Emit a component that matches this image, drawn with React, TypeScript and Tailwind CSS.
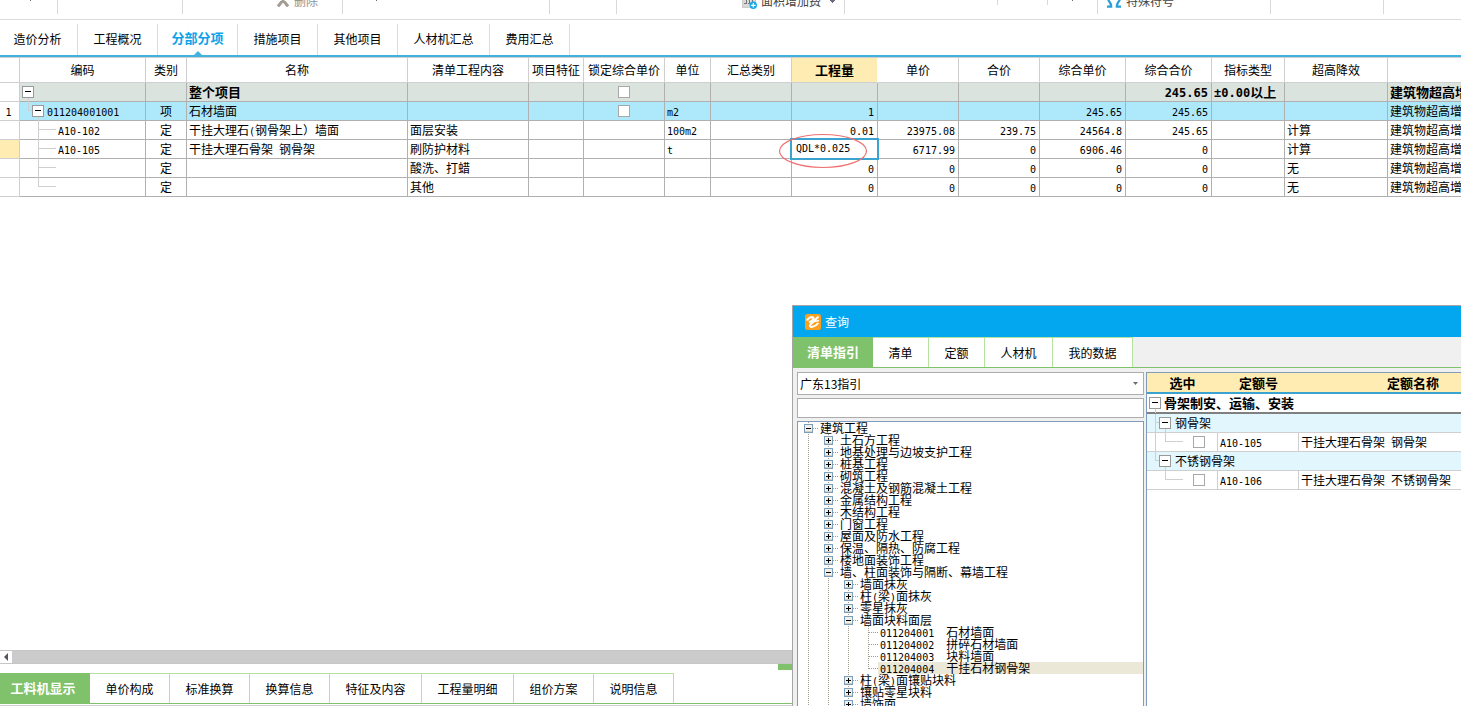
import React from "react";

const SANS = "font-['Noto_Sans_CJK_SC',sans-serif]";

/* Latin runs are set in a narrow monospace so that figures line up in columns. */
function T({ children, bold }: { children: string; bold?: boolean }) {
  const parts = children.split(/([\x20-\x7e±]+)/).filter(Boolean);
  return (
    <>
      {parts.map((p, i) =>
        /^[\x20-\x7e±]/.test(p) ? (
          <span
            key={i}
            className={
              bold
                ? "whitespace-pre font-['DejaVu_Sans_Mono',monospace] text-[12px] leading-none"
                : "whitespace-pre font-['DejaVu_Sans_Mono',monospace] text-[10px] leading-none"
            }
          >
            {p}
          </span>
        ) : (
          <React.Fragment key={i}>{p}</React.Fragment>
        )
      )}
    </>
  );
}

function Caret({ className = "" }: { className?: string }) {
  return (
    <svg className={`h-1 w-[7px] shrink-0 ${className}`} viewBox="0 0 7 4" shapeRendering="crispEdges">
      <path d="M0 0h7v1H6v1H5v1H4v1H3V3H2V2H1V1H0z" fill="#6b6b7b" />
    </svg>
  );
}

function Toolbar() {
  const sep = "shrink-0 border-r border-[#d9d9d9]";
  return (
    <div className="h-5 shrink-0 overflow-hidden border-b border-[#dcdcdc] bg-white text-[12px] text-[#444]">
      <div className="-mt-[6px] flex h-5 items-start leading-[14px]">
        <div className={`${sep} h-5 w-[58px] pl-[27px] pt-[3px]`}>
          <Caret />
        </div>
        <div className={`${sep} h-5 w-[125px]`} />
        <div className={`${sep} flex h-5 w-[160px] pl-[93px]`}>
          <button className="flex items-start gap-1 text-[#8f8f8f]">
            <svg className="h-[13px] w-[14px]" viewBox="0 0 14 13">
              <path d="M2 0L7 6L12 0M7 6L2 12.500M7 6L12 12.500" stroke="#a39d94" strokeWidth="3" fill="none" />
            </svg>
            删除
          </button>
        </div>
        <div className={`${sep} h-5 w-[207px] pl-[30px] pt-[3px]`}>
          <Caret />
        </div>
        <div className={`${sep} h-5 w-[67px]`} />
        <div className={`${sep} flex h-5 w-[228px] pl-[125px]`}>
          <button className="flex items-start gap-1">
            <svg className="h-[15px] w-[15px]" viewBox="0 0 15 15">
              <rect x="0.500" y="0.500" width="13" height="13" fill="#d9d9d9" stroke="#cccccc" />
              <path d="M2 9.500h3M6 9.500h2M9 9.500h2M4.500 6v4M7.500 6v4M10.500 6v4" stroke="#777" fill="none" />
              <circle cx="11.300" cy="11.300" r="3.700" fill="#16a9e6" />
              <path d="M9 11.300h4.600M11.300 9v4.600" stroke="#fff" strokeWidth="1.200" />
            </svg>
            面积增加费
            <Caret className="ml-1 mt-[5px]" />
          </button>
        </div>
        <div className={`${sep} flex h-5 w-[253px]`}>
          <div className={`${sep} h-[11px] w-[153px]`} />
          <div className={`${sep} h-[11px] w-[50px]`} />
          <Caret className="ml-[21px] mt-[3px]" />
        </div>
        <div className={`${sep} flex h-5 w-[173px] pl-2`}>
          <button className="flex items-start gap-1">
            <svg className="h-[14px] w-4" viewBox="0 0 16 14">
              <path
                d="M1 12.700H5.200C5.200 10.500 4.500 9 3.300 7.500C2 6 2 4.500 2 3.500C2 0 4.500 -3 8 -3S14 0 14 3.500C14 4.500 14 6 12.700 7.500C11.500 9 10.800 10.500 10.800 12.700H15"
                stroke="#2a9fd8"
                strokeWidth="2.200"
                fill="none"
              />
            </svg>
            特殊符号
          </button>
        </div>
        <div className={`${sep} h-5 w-[113px]`} />
      </div>
    </div>
  );
}

const mainTabs = ["造价分析", "工程概况", "分部分项", "措施项目", "其他项目", "人材机汇总", "费用汇总"];

function MainTabs() {
  return (
    <nav className="shrink-0 border-b-2 border-[#41b1de] bg-white pt-1">
      <div className="-ml-0.5 flex">
        {mainTabs.map((t) => {
          const active = t === "分部分项";
          return (
            <button
              key={t}
              className={`relative h-[31px] shrink-0 border-r border-[#dcdcdc] text-center ${
                t.length > 4 ? "w-[92px]" : "w-20"
              } ${active ? "pb-1 text-[13px] font-bold text-[#0aa3e8]" : "pb-0.5 text-[12px] text-black"}`}
            >
              {t}
              {active && (
                <svg className="absolute bottom-0 left-9 h-1 w-2" viewBox="0 0 8 4">
                  <path d="M0 4L4 0L8 4z" fill="#41b1de" />
                </svg>
              )}
            </button>
          );
        })}
      </div>
    </nav>
  );
}

function Expander({ label, stem = true }: { label: string; stem?: boolean }) {
  return (
    <button
      aria-label={label}
      className={`relative mt-[3px] h-3 w-3 shrink-0 border border-[#999] bg-white ${
        stem ? "after:absolute after:left-[5px] after:top-[11px] after:h-1 after:w-px after:bg-[#cfcfcf]" : ""
      }`}
    >
      <span className="absolute left-0.5 top-1 block h-px w-1.5 bg-black" />
    </button>
  );
}

type GuideKind = "branch" | "branchEnd" | "leaf" | "leafEnd" | "leafEndOpen";

const guidePaths: Record<GuideKind, string> = {
  branch: "M8.5 0V19M8 8.5H12",
  branchEnd: "M8.5 0V9M8 8.5H12",
  leaf: "M18.5 0V19M18 8.5H36",
  leafEnd: "M18.5 0V9M18 8.5H36",
  leafEndOpen: "M8.5 0V19M18.5 0V9M18 8.5H36",
};

function Guide({ kind }: { kind: GuideKind }) {
  const short = kind === "branch" || kind === "branchEnd";
  return (
    <svg className={`h-[18px] shrink-0 overflow-visible ${short ? "w-3" : "w-[38px]"}`} shapeRendering="crispEdges">
      <path d={guidePaths[kind]} stroke="#cfcfcf" fill="none" />
    </svg>
  );
}

function Check({ label, className = "" }: { label: string; className?: string }) {
  return (
    <input
      type="checkbox"
      aria-label={label}
      className={`block h-3 w-3 shrink-0 appearance-none border border-[#a8a8a8] bg-white ${className}`}
    />
  );
}

const headers = [
  "", "编码", "类别", "名称", "清单工程内容", "项目特征", "锁定综合单价", "单位", "汇总类别",
  "工程量", "单价", "合价", "综合单价", "综合合价", "指标类型", "超高降效", "",
];

type Row = {
  no: string; code: string; type: string; name: string; work: string; unit: string;
  qty: string; price: string; total: string; cPrice: string; cTotal: string;
  index: string; height: string; kind: "root" | "item" | "sub";
};

const rows: Row[] = [
  { no: "", code: "", type: "", name: "整个项目", work: "", unit: "", qty: "", price: "", total: "", cPrice: "", cTotal: "245.65", index: "±0.00以上", height: "", kind: "root" },
  { no: "1", code: "011204001001", type: "项", name: "石材墙面", work: "", unit: "m2", qty: "1", price: "", total: "", cPrice: "245.65", cTotal: "245.65", index: "", height: "", kind: "item" },
  { no: "", code: "A10-102", type: "定", name: "干挂大理石(钢骨架上）墙面", work: "面层安装", unit: "100m2", qty: "0.01", price: "23975.08", total: "239.75", cPrice: "24564.8", cTotal: "245.65", index: "", height: "计算", kind: "sub" },
  { no: "", code: "A10-105", type: "定", name: "干挂大理石骨架 钢骨架", work: "刷防护材料", unit: "t", qty: "QDL*0.025", price: "6717.99", total: "0", cPrice: "6906.46", cTotal: "0", index: "", height: "计算", kind: "sub" },
  { no: "", code: "", type: "定", name: "", work: "酸洗、打蜡", unit: "", qty: "0", price: "0", total: "0", cPrice: "0", cTotal: "0", index: "", height: "无", kind: "sub" },
  { no: "", code: "", type: "定", name: "", work: "其他", unit: "", qty: "0", price: "0", total: "0", cPrice: "0", cTotal: "0", index: "", height: "无", kind: "sub" },
];

function QtyEditor({ value }: { value: string }) {
  return (
    <>
      <input
        aria-label="工程量"
        defaultValue={value}
        className="absolute -left-0.5 -top-0.5 z-10 h-[22px] w-[89px] border-2 border-[#3aa3cf] bg-white pb-0.5 pl-1 font-['DejaVu_Sans_Mono',monospace] text-[10px] outline-none"
      />
      <svg className="pointer-events-none absolute -left-[14px] -top-[7px] z-20 h-9 w-[90px]" viewBox="0 0 90 36">
        <ellipse cx="45" cy="18" rx="43.500" ry="16.500" fill="none" stroke="#f07070" strokeWidth="1.200" />
      </svg>
    </>
  );
}

function MainTable() {
  const cell = "h-[19px] border-b border-r border-[#b0b0b0] p-0 align-top overflow-hidden whitespace-nowrap";
  return (
    <table className="w-full table-fixed border-separate border-spacing-0 border-t border-[#cfcfcf] text-[12px] leading-[17px] text-black">
      <colgroup>
        <col className="w-5" />
        <col className="w-[126px]" />
        <col className="w-[41px]" />
        <col className="w-[221px]" />
        <col className="w-[121px]" />
        <col className="w-[55px]" />
        <col className="w-[81px]" />
        <col className="w-[46px]" />
        <col className="w-[81px]" />
        <col className="w-[86px]" />
        <col className="w-[81px]" />
        <col className="w-[81px]" />
        <col className="w-[86px]" />
        <col className="w-[86px]" />
        <col className="w-[73px]" />
        <col className="w-[103px]" />
        <col />
      </colgroup>
      <thead>
        <tr>
          {headers.map((h, i) => (
            <th
              key={i}
              className={`h-[25px] whitespace-nowrap border-b border-r p-0 pb-px last:border-r-0 ${
                h === "工程量"
                  ? "border-white border-b-[#cfcfcf] bg-[#ffecb3] text-[13px] font-bold"
                  : "border-[#cfcfcf] font-normal"
              }`}
            >
              {h}
            </th>
          ))}
        </tr>
      </thead>
      <tbody>
        {rows.map((r, i) => {
          const bold = r.kind === "root";
          const editing = i === 3;
          const num = `${cell} pr-[3px] text-right`;
          const txt = `${cell} pl-0.5`;
          return (
            <tr
              key={i}
              className={
                bold ? "bg-[#dae3de] text-[13px] font-bold" : r.kind === "item" ? "bg-[#ade8fb]" : "bg-white"
              }
            >
              <td
                className={`h-[19px] border-b border-r border-[#cfcfcf] p-0 pr-0.5 text-center align-top ${
                  editing ? "bg-[#ffecb3]" : "bg-white"
                }`}
              >
                <T>{r.no}</T>
              </td>
              <td className={`${cell} overflow-visible`}>
                <div className="flex h-[18px] items-start">
                  {r.kind === "root" && (
                    <span className="flex pl-0.5">
                      <Expander label="折叠整个项目" />
                    </span>
                  )}
                  {r.kind === "item" && (
                    <>
                      <Guide kind="branchEnd" />
                      <Expander label="折叠石材墙面" />
                      <span className="pl-[3px]">
                        <T>{r.code}</T>
                      </span>
                    </>
                  )}
                  {r.kind === "sub" && (
                    <>
                      <Guide kind={i === rows.length - 1 ? "leafEnd" : "leaf"} />
                      <span>
                        <T>{r.code}</T>
                      </span>
                    </>
                  )}
                </div>
              </td>
              <td className={`${cell} text-center`}>{r.type}</td>
              <td className={txt}><T>{r.name}</T></td>
              <td className={txt}>{r.work}</td>
              <td className={cell} />
              <td className={cell}>
                {r.kind !== "sub" && <Check label="锁定综合单价" className="mx-auto mt-[3px]" />}
              </td>
              <td className={txt}><T>{r.unit}</T></td>
              <td className={cell} />
              <td className={editing ? "relative h-[19px] border-b border-r border-[#b0b0b0] p-0" : num}>
                {editing ? <QtyEditor value={r.qty} /> : <T>{r.qty}</T>}
              </td>
              <td className={num}><T>{r.price}</T></td>
              <td className={num}><T>{r.total}</T></td>
              <td className={num}><T>{r.cPrice}</T></td>
              <td className={num}><T bold={bold}>{r.cTotal}</T></td>
              <td className={txt}><T bold={bold}>{r.index}</T></td>
              <td className={txt}>{r.height}</td>
              <td className={`${txt} border-r-0`}>建筑物超高增加</td>
            </tr>
          );
        })}
      </tbody>
    </table>
  );
}

const bottomTabs = ["工料机显示", "单价构成", "标准换算", "换算信息", "特征及内容", "工程量明细", "组价方案", "说明信息"];

function BottomPane() {
  return (
    <div className="shrink-0">
      <div className="flex h-[14px] border-y border-[#c6c6c6] bg-[#cbcbcb]">
        <button aria-label="向左滚动" className="flex w-3 items-center justify-center bg-white">
          <svg className="h-2 w-1" viewBox="0 0 4 8">
            <path d="M4 0V8L0 4z" fill="#555560" />
          </svg>
        </button>
      </div>
      <div className="h-[9px]">
        <div className="ml-[778px] h-1.5 w-[60px] bg-[#80c26b]" />
      </div>
      <div className="flex border-b border-[#80c26b]">
        {bottomTabs.map((t, i) => (
          <button
            key={t}
            className={`h-[30px] shrink-0 whitespace-nowrap ${
              i === 0
                ? "w-[90px] bg-[#80c26b] pr-1 text-[13px] font-bold text-white"
                : `border-r border-t border-[#b5e2a0] text-[12px] text-black ${t.length > 4 ? "w-[92px]" : "w-20"}`
            }`}
          >
            {t}
          </button>
        ))}
      </div>
      <div className="mt-px h-px bg-[#cfcfcf]" />
    </div>
  );
}

type Node = { level: number; text: string; state: "open" | "closed" | "leaf"; last?: boolean; selected?: boolean };

const tree: Node[] = [
  { level: 0, text: "建筑工程", state: "open" },
  { level: 1, text: "土石方工程", state: "closed" },
  { level: 1, text: "地基处理与边坡支护工程", state: "closed" },
  { level: 1, text: "桩基工程", state: "closed" },
  { level: 1, text: "砌筑工程", state: "closed" },
  { level: 1, text: "混凝土及钢筋混凝土工程", state: "closed" },
  { level: 1, text: "金属结构工程", state: "closed" },
  { level: 1, text: "木结构工程", state: "closed" },
  { level: 1, text: "门窗工程", state: "closed" },
  { level: 1, text: "屋面及防水工程", state: "closed" },
  { level: 1, text: "保温、隔热、防腐工程", state: "closed" },
  { level: 1, text: "楼地面装饰工程", state: "closed" },
  { level: 1, text: "墙、柱面装饰与隔断、幕墙工程", state: "open" },
  { level: 2, text: "墙面抹灰", state: "closed" },
  { level: 2, text: "柱(梁)面抹灰", state: "closed" },
  { level: 2, text: "零星抹灰", state: "closed" },
  { level: 2, text: "墙面块料面层", state: "open" },
  { level: 3, text: "011204001  石材墙面", state: "leaf" },
  { level: 3, text: "011204002  拼碎石材墙面", state: "leaf" },
  { level: 3, text: "011204003  块料墙面", state: "leaf" },
  { level: 3, text: "011204004  干挂石材钢骨架", state: "leaf", last: true, selected: true },
  { level: 2, text: "柱(梁)面镶贴块料", state: "closed" },
  { level: 2, text: "镶贴零星块料", state: "closed" },
  { level: 2, text: "墙饰面", state: "closed" },
];

function TreeCell({ state, last }: { state: "line" | Node["state"]; last?: boolean }) {
  return (
    <svg className="h-3 w-5 shrink-0" viewBox="0 0 20 12" shapeRendering="crispEdges">
      <path d={last ? "M10.500 0V7" : "M10.500 0V12"} stroke="#a39f90" strokeDasharray="1 1" />
      {state !== "line" && <path d="M11 6.500H20" stroke="#a39f90" strokeDasharray="1 1" />}
      {(state === "open" || state === "closed") && (
        <>
          <rect x="6.500" y="2.500" width="8" height="8" fill="#f1efe8" stroke="#7b9ebd" />
          <path d="M7 9.500H14" stroke="#d3cfc2" />
          <path d={state === "open" ? "M8 6.500H13" : "M8 6.500H13M10.500 4V9"} stroke="#000" />
        </>
      )}
    </svg>
  );
}

function Tree() {
  return (
    <ul className="min-h-0 flex-1 overflow-hidden border border-b-0 border-[#7f9db9] bg-white text-[12px] leading-3 text-black">
      {tree.map((n, i) => (
        <li key={i} className="flex h-3">
          {Array.from({ length: n.level }, (_, k) => (
            <TreeCell key={k} state="line" />
          ))}
          <TreeCell state={n.state} last={n.last} />
          <span className={`flex-1 whitespace-nowrap pl-0.5 ${n.selected ? "bg-[#ebe8d8]" : ""}`}>
            <T>{n.text}</T>
          </span>
        </li>
      ))}
    </ul>
  );
}

function QuotaGroup({ name, code, item, last }: { name: string; code: string; item: string; last?: boolean }) {
  const line = "h-[19px] border-b border-[#cfcfcf] p-0 align-top whitespace-nowrap";
  return (
    <>
      <tr className="bg-[#e2f6fe]">
        <td colSpan={3} className={line}>
          <div className="flex h-[18px] items-start">
            <Guide kind={last ? "branchEnd" : "branch"} />
            <Expander label={`折叠${name}`} />
            <span className="pl-1">{name}</span>
          </div>
        </td>
      </tr>
      <tr>
        <td className={`${line} border-r`}>
          <div className="flex h-[18px] items-start">
            <Guide kind={last ? "leafEnd" : "leafEndOpen"} />
            <Check label={`选中 ${code}`} className="ml-2 mt-[3px]" />
          </div>
        </td>
        <td className={`${line} border-r pl-0.5`}><T>{code}</T></td>
        <td className={`${line} pl-0.5`}><T>{item}</T></td>
      </tr>
    </>
  );
}

function QuotaTable() {
  const th = "h-[21px] border-b-2 border-[#3aa3cf] bg-[#ffecb3] p-0 font-bold";
  return (
    <div className="min-w-0 flex-1 overflow-hidden border-l border-t border-[#7f9db9] bg-white">
      <table className="w-[380px] table-fixed border-separate border-spacing-0 text-[12px] leading-[17px] text-black">
        <colgroup>
          <col className="w-[71px]" />
          <col className="w-[81px]" />
          <col className="w-[228px]" />
        </colgroup>
        <thead>
          <tr className="text-[13px]">
            <th className={th}>选中</th>
            <th className={th}>定额号</th>
            <th className={th}>定额名称</th>
          </tr>
        </thead>
        <tbody>
          <tr>
            <td colSpan={3} className="h-5 border-b-2 border-[#808080] p-0 align-top">
              <div className="flex h-[18px] items-start pl-0.5 text-[13px] font-bold">
                <Expander label="折叠骨架制安、运输、安装" />
                <span className="whitespace-nowrap pl-[3px]">骨架制安、运输、安装</span>
              </div>
            </td>
          </tr>
          <QuotaGroup name="钢骨架" code="A10-105" item="干挂大理石骨架 钢骨架" />
          <QuotaGroup name="不锈钢骨架" code="A10-106" item="干挂大理石骨架 不锈钢骨架" last />
        </tbody>
      </table>
    </div>
  );
}

const dialogTabs = [
  { t: "清单指引", w: "w-20" },
  { t: "清单", w: "w-14" },
  { t: "定额", w: "w-14" },
  { t: "人材机", w: "w-[68px]" },
  { t: "我的数据", w: "w-20" },
];

function QueryDialog() {
  return (
    <section
      role="dialog"
      aria-label="查询"
      className="absolute bottom-0 left-[792px] right-0 top-[305px] z-30 flex flex-col overflow-hidden border-l border-t border-[#a5a5a5] bg-[#f0f0f0]"
    >
      <header className="flex h-[31px] shrink-0 items-center gap-1 bg-[#02a7f0] pl-3 text-[12px] text-white">
        <svg className="h-4 w-4" viewBox="0 0 16 16">
          <rect width="16" height="16" rx="2.500" fill="#f9a01f" />
          <path d="M2 6.500C3 4 6.500 2.300 8 3.500C9.300 4.600 7.500 7 4 8.300" stroke="#fff" strokeWidth="2.200" fill="none" />
          <path d="M13.500 2.500L5.500 10.500C4.300 12.300 5.300 13.300 7.500 12.700C9.500 12.200 12 10.800 13.200 9" stroke="#fff" strokeWidth="2" fill="none" />
          <path d="M9 7.500L14 6.500" stroke="#fff" strokeWidth="1.500" fill="none" />
        </svg>
        <h2>查询</h2>
      </header>
      <div className="flex shrink-0 border-b border-[#80c26b]">
        {dialogTabs.map(({ t, w }, i) => (
          <button
            key={t}
            className={`h-[30px] shrink-0 ${w} ${
              i === 0
                ? "bg-[#80c26b] text-[13px] font-bold text-white"
                : "border-r border-t border-[#b5e2a0] bg-white text-[12px] text-black"
            }`}
          >
            {t}
          </button>
        ))}
      </div>
      <div className="flex min-h-0 flex-1 gap-0.5 pl-1 pt-1">
        <div className="flex w-[347px] shrink-0 flex-col">
          <div className="relative h-[23px] shrink-0">
            <select
              aria-label="清单库"
              className="block h-full w-full appearance-none border border-[#acacac] bg-white pl-0.5 text-[12px] text-black"
            >
              <option>广东13指引</option>
            </select>
            <svg className="pointer-events-none absolute right-1.5 top-[10px] h-[3px] w-[5px]" viewBox="0 0 5 3">
              <path d="M0 0H5L2.500 3z" fill="#6b6b7b" />
            </svg>
          </div>
          <input
            aria-label="搜索"
            className="my-[3px] h-5 w-full shrink-0 border border-[#acacac] bg-white px-1 text-[12px] outline-none"
          />
          <Tree />
        </div>
        <QuotaTable />
      </div>
    </section>
  );
}

export default function App() {
  return (
    <div className={`relative flex h-screen flex-col overflow-hidden bg-white ${SANS}`}>
      <Toolbar />
      <MainTabs />
      <main className="min-h-0 flex-1 overflow-hidden">
        <MainTable />
      </main>
      <BottomPane />
      <QueryDialog />
    </div>
  );
}
